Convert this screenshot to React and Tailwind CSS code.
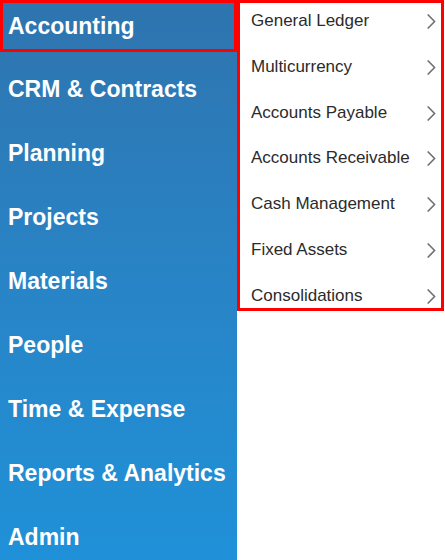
import React from 'react';

const modules = ['CRM & Contracts', 'Planning', 'Projects', 'Materials', 'People', 'Time & Expense', 'Reports & Analytics', 'Admin'];

const subItems = ['General Ledger', 'Multicurrency', 'Accounts Payable', 'Accounts Receivable', 'Cash Management', 'Fixed Assets', 'Consolidations'];

function Chevron() {
  return (
    <svg width="9" height="15" viewBox="0 0 9 15" fill="none">
      <polyline points="1.2,1 7.6,7.5 1.2,14" stroke="#707070" strokeWidth="1.7" strokeLinecap="round" strokeLinejoin="round" />
    </svg>
  );
}

export default function App() {
  return (
    <div className="flex w-[445px] h-[560px] bg-white overflow-hidden" style={{ fontFamily: '"Liberation Sans", Arial, sans-serif' }}>
      {/* Module sidebar */}
      <div className="w-[237px] h-[560px] shrink-0 bg-gradient-to-b from-[#2e74ae] via-[#2884c6] to-[#1f91d8] text-white font-bold text-[23px] leading-7">
        <div className="h-[52px] border-[3px] border-[#ff0000] pl-[5px] flex items-center">Accounting</div>
        <div className="mt-[5px] flex flex-col">
          {modules.map((m) => (
            <div key={m} className="h-16 px-2 flex items-center">{m}</div>
          ))}
        </div>
      </div>

      {/* Accounting submenu */}
      <div className="w-[207px] h-[311px] shrink-0 border-[3px] border-[#ff0000] bg-white overflow-hidden">
        {subItems.map((s) => (
          <div key={s} className="h-[45.8px] pt-[8px] pl-[11px] pr-[5px] flex items-start justify-between text-[17px] leading-5 text-[#2b2b2b]">
            <span>{s}</span>
            <span className="pt-[3px]"><Chevron /></span>
          </div>
        ))}
      </div>
    </div>
  );
}
